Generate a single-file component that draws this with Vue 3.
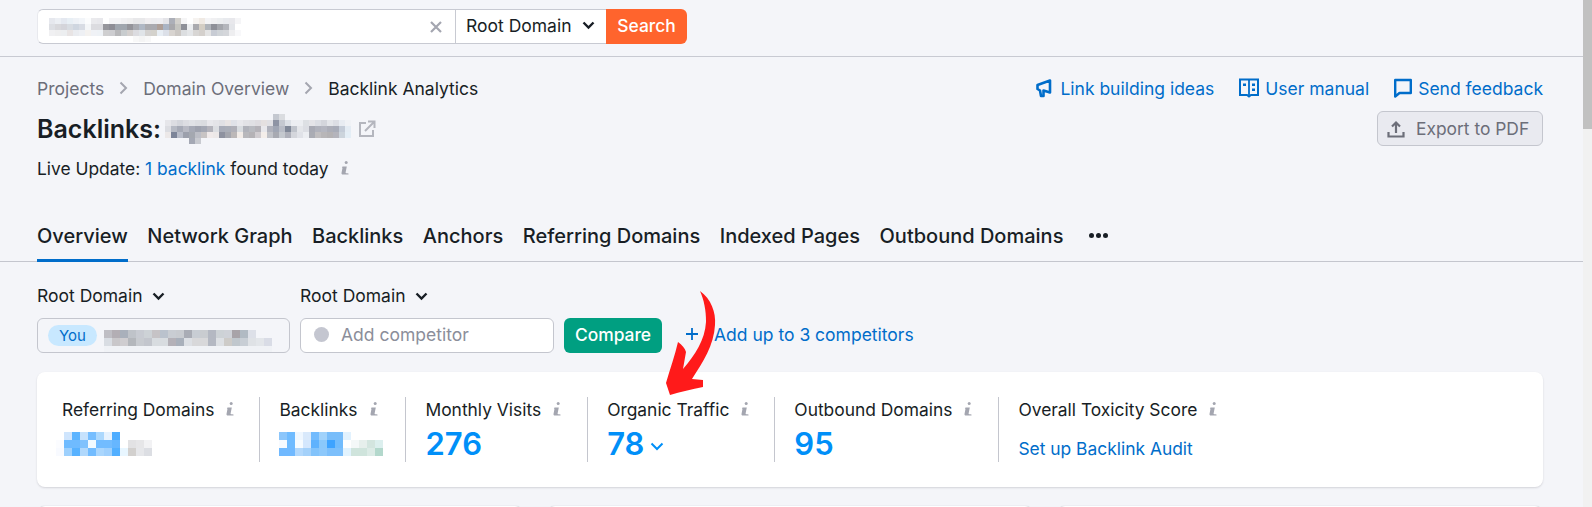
<template>
  <div class="page">
    <div class="topbar">
      <div class="search">
        <div class="search_input">
          <div class="pix url_pix">
            <div v-for="(row, r) in blurs.url" :key="r" class="pix_row">
              <i v-for="(c, k) in row" :key="k" class="cell6" :style="{ background: c }"></i>
            </div>
          </div>
          <svg class="clear" width="14" height="14" viewBox="0 0 14 14"><path d="M2 2l10 10M12 2L2 12" stroke="#a4a6b0" stroke-width="2.2" fill="none" /></svg>
        </div>
        <div class="search_select">
          Root Domain
          <svg class="chev" width="13" height="9" viewBox="0 0 13 9"><path d="M1.500 1.500L6.500 6.500l5-5" stroke="#181e25" stroke-width="2.400" fill="none" /></svg>
        </div>
        <button class="search_btn">Search</button>
      </div>
    </div>

    <div class="head">
      <div class="head_top">
        <div class="crumbs">
          <span>Projects</span>
          <svg width="9" height="14" viewBox="0 0 9 14"><path d="M1.500 1.500L7 7l-5.500 5.500" stroke="#a4a6b0" stroke-width="2" fill="none" /></svg>
          <span>Domain Overview</span>
          <svg width="9" height="14" viewBox="0 0 9 14"><path d="M1.500 1.500L7 7l-5.500 5.500" stroke="#a4a6b0" stroke-width="2" fill="none" /></svg>
          <span class="crumb_last">Backlink Analytics</span>
        </div>
        <div class="head_links">
          <a class="link_idea">
            <svg width="16" height="20" viewBox="0 0 16 20"><path d="M14 2.500v12L7.500 12.500V18H5l-1-5.500L1.500 11V7z" fill="none" stroke="#006dca" stroke-width="2.600" stroke-linejoin="round" /></svg>
            Link building ideas
          </a>
          <a>
            <svg width="20" height="20" viewBox="0 0 20 20"><path d="M1 1.500h18v15.500h-7l-2 1.500-2-1.500H1z" fill="none" stroke="#006dca" stroke-width="2" /><path d="M10 2v15" stroke="#006dca" stroke-width="1.800" /><path d="M4 5.500h3V8H4zM13 5.500h3V8h-3zM13 10.500h3V13h-3z" fill="#006dca" /></svg>
            User manual
          </a>
          <a>
            <svg width="18" height="20" viewBox="0 0 18 20"><path d="M1.200 2h15.600v13H5.500l-4.300 3.500z" fill="none" stroke="#006dca" stroke-width="2.400" stroke-linejoin="round" /></svg>
            Send feedback
          </a>
        </div>
      </div>

      <div class="head_mid">
        <div class="title_row">
          <h1>Backlinks:</h1>
          <div class="pix title_pix">
            <div v-for="(row, r) in blurs.title" :key="r" class="pix_row">
              <i v-for="(c, k) in row" :key="k" class="cell6" :style="{ background: c }"></i>
            </div>
          </div>
          <svg width="18" height="18" viewBox="0 0 18 18"><path d="M8 3H2v13h13v-6" fill="none" stroke="#b4b6be" stroke-width="2" /><path d="M7 11l9-9M10 1.500h6.500V8" fill="none" stroke="#b4b6be" stroke-width="2" /></svg>
        </div>
        <button class="export">
          <svg width="18" height="18" viewBox="0 0 18 18"><path d="M9 13V3M5 6.500L9 2.500l4 4" fill="none" stroke="#6c6e79" stroke-width="2.200" /><path d="M1.500 12v4.500h15V12" fill="none" stroke="#6c6e79" stroke-width="2.200" /></svg>
          Export to PDF
        </button>
      </div>

      <div class="live">
        Live Update:&nbsp;<a>1 backlink</a>&nbsp;found today
        <svg class="info live_info" width="9" height="16" viewBox="0 0 9 16"><circle cx="5.200" cy="2.500" r="1.500" /><path d="M1.500 6.500h4.300L4.600 12.500c-.1.700.7.900 2.900.9v1.100H1.800c-.9 0-1.500-.6-1.300-1.500l1-5.300H.9z" /></svg>
      </div>
    </div>

    <div class="tabs">
      <div v-for="t in tabs" :key="t" class="tab" :class="{ tab_active: t === 'Overview' }">{{ t }}</div>
      <div class="tab_more"><i></i><i></i><i></i></div>
    </div>

    <div class="compare">
      <div class="field">
        <div class="field_label">
          Root Domain
          <svg width="13" height="9" viewBox="0 0 13 9"><path d="M1.500 1.500L6.500 6.500l5-5" stroke="#181e25" stroke-width="2.400" fill="none" /></svg>
        </div>
        <div class="box box_you">
          <span class="you">You</span>
          <div class="pix you_pix">
            <div v-for="(row, r) in blurs.you" :key="r" class="pix_row">
              <i v-for="(c, k) in row" :key="k" class="cell8" :style="{ background: c }"></i>
            </div>
          </div>
        </div>
      </div>
      <div class="field">
        <div class="field_label">
          Root Domain
          <svg width="13" height="9" viewBox="0 0 13 9"><path d="M1.500 1.500L6.500 6.500l5-5" stroke="#181e25" stroke-width="2.400" fill="none" /></svg>
        </div>
        <div class="box">
          <span class="dot"></span>
          <span class="placeholder">Add competitor</span>
        </div>
      </div>
      <button class="compare_btn">Compare</button>
      <a class="add">
        <svg width="14" height="14" viewBox="0 0 14 14"><path d="M7 1v12M1 7h12" stroke="#006dca" stroke-width="1.800" fill="none" /></svg>
        Add up to 3 competitors
      </a>
    </div>

    <div class="stats">
      <div v-for="s in stats" :key="s.label" class="stat">
        <div class="stat_label">
          {{ s.label }}
          <svg class="info" width="9" height="16" viewBox="0 0 9 16"><circle cx="5.200" cy="2.500" r="1.500" /><path d="M1.500 6.500h4.300L4.600 12.500c-.1.700.7.900 2.900.9v1.100H1.800c-.9 0-1.500-.6-1.300-1.500l1-5.300H.9z" /></svg>
        </div>
        <div v-if="s.blur" class="pix stat_pix">
          <div v-for="(row, r) in blurs[s.blur]" :key="r" class="pix_row">
            <i v-for="(c, k) in row" :key="k" class="cell8" :style="{ background: c }"></i>
          </div>
        </div>
        <div v-else-if="s.value" class="stat_value">
          {{ s.value }}
          <svg v-if="s.open" width="14" height="9" viewBox="0 0 14 9"><path d="M1.500 1.500L7 7l5.500-5.500" stroke="#008ff8" stroke-width="2" fill="none" /></svg>
        </div>
        <a v-else class="stat_link">{{ s.link }}</a>
      </div>
    </div>

    <div class="lower">
      <div></div>
      <div></div>
      <div></div>
    </div>

    <svg class="arrow" width="60" height="114" viewBox="660 287 60 114">
      <path d="M700 291C711 299 716 312 715 325C714 345 703 362 692 379L703 380L703 387C692 389 680 392 670 395L666 383C670 369 675 355 678 342C682 345 685 348 686 352L683 369C695 355 705 340 706 322C706 310 704 300 700 291Z" fill="#ff1a1a" />
    </svg>

    <div class="scrollbar"><div class="thumb"></div></div>
  </div>
</template>

<script setup>
const tabs = ['Overview', 'Network Graph', 'Backlinks', 'Anchors', 'Referring Domains', 'Indexed Pages', 'Outbound Domains']

const stats = [
  { label: 'Referring Domains', blur: 'refs' },
  { label: 'Backlinks', blur: 'links' },
  { label: 'Monthly Visits', value: '276' },
  { label: 'Organic Traffic', value: '78', open: true },
  { label: 'Outbound Domains', value: '95' },
  { label: 'Overall Toxicity Score', link: 'Set up Backlink Audit' },
]

// Размытые куски скриншота, цвет на каждую клетку
const t = 'transparent'
const blurs = {
  url: [
    ['#e6e8ee', '#eceff4', '#e4e8f0', '#e8eff5', '#eef1f6', '#f2f5f9', '#fbfcfd', '#eaeaed', '#e8e8ec', '#fff', '#f4f4f6', '#f4f4f6', '#f0f0f2', '#eeeeef', '#e8e8ea', '#e8e8ea', '#f0eef0', '#ededf0', '#eeeef2', '#e4e4e8', '#acafb8', '#d2d0cc', '#f5f5f6', '#fff', '#f6f3f0', '#f0eae4', '#f4f4f6', '#f0f0f2', '#eceef0', '#e8eaee', '#e8e8ec', '#f5f5f7'],
    ['#dddfe4', '#d8d8dc', '#d4d4da', '#d8dce2', '#cfd6e0', '#d8dce4', '#f4f6f8', '#dcdce0', '#dcdce0', '#96969c', '#8e8e96', '#a0a6ae', '#a0a6ae', '#94949a', '#a8aab0', '#b0b8c4', '#aaaaae', '#aaaab0', '#ae9f98', '#aab4c4', '#a8a8ac', '#c4c4c0', '#8e9098', '#eceef0', '#aaaaae', '#d4cec4', '#b0b4ba', '#8e9098', '#a4a6ac', '#b4b6bc', '#e4e6ea', '#fff'],
    ['#f0f0f2', '#eeeeef', '#eceef0', '#e8e4e4', '#eaecf0', '#eef0f4', '#f4f2f0', '#f0f2f6', '#eef2f6', '#cfcfd0', '#cdcdd0', '#b8b8ba', '#c8ccce', '#d4d0ce', '#dcdce0', '#e0e4e8', '#d4d2d0', '#d4d2cc', '#e8eef4', '#dce0e8', '#d8d4d0', '#ccc8c4', '#dcdee0', '#e4e6e8', '#d8d6d4', '#d4d0cc', '#e4e4e4', '#c8ccd4', '#d0d4d8', '#d4d6da', '#eeeef0', '#f8f8fa'],
    [t, t, t, t, t, t, t, t, t, t, t, t, t, t, '#f8f8f8', '#f4f4f4', '#f8f8f8', t, t, t, t, t, t, t, t, t, t, t, t, t, t, t],
  ],
  title: [
    [t, t, t, t, t, t, t, t, t, t, t, t, t, t, t, t, t, t, '#c4c8d0', '#dadce0', t, t, t, t, t, t, t, t, t, t, t],
    ['#e6e6ea', '#dcdde2', '#d4d6dc', '#dcdde2', '#e0e2e6', '#dcdee2', '#dadce0', '#e8e8ec', '#e4e4e8', '#e0e0e4', '#e8e4e4', '#e0e2e8', '#e8e8ec', '#e2e2e6', '#e0e0e4', '#dedce0', '#e4e0e0', '#e0e0e4', '#8e94a4', '#c4c8d0', '#dce0e6', '#eceef2', '#eceef2', '#dde0e4', '#e4e4e8', '#dcdee4', '#d4d6dc', '#e4e6ea', '#dcdee4', '#e8ecf2', '#f0f2f6'],
    ['#dcdde2', '#b6bac4', '#a6aab6', '#b8bac4', '#a6aab6', '#9ea2ae', '#a4a8b4', '#b4b4bc', '#dcdee2', '#a8acb8', '#aaaeb8', '#b0b0b8', '#d8dce0', '#b0b2ba', '#b8bac0', '#b4b2b8', '#e8e8ec', '#b0b2bc', '#a0a6b4', '#b8bcc6', '#808898', '#c0c4cc', '#e4e6ea', '#dcdee4', '#a8aab4', '#b0b2bc', '#b4b6c0', '#acaeb8', '#a8acb8', '#c4ccd8', '#e4ecf4'],
    ['#ece8e8', '#7c8498', '#b8bcc8', '#9ca0ac', '#a4a8b0', '#bcbec6', '#c8c4c4', '#f0eaea', '#ece8e8', '#8e92a0', '#a4a6ae', '#bcb8b8', '#f2ece8', '#b8b8bc', '#b4b2b6', '#d0ccd0', '#f4eeea', '#c0c2c8', '#a8aab2', '#c4c8ce', '#aeb0ba', '#d4d6dc', '#e0e2e8', '#eceef2', '#aaacb4', '#c0bec0', '#b8b6b8', '#b4b2b4', '#b4b4bc', '#ccd4dc', '#e4eef6'],
    [t, t, t, t, '#a4a8b4', '#c8cad0', t, t, t, t, t, t, t, t, t, t, t, t, t, t, t, t, t, t, t, t, t, t, t, t, t],
  ],
  you: [
    ['#bfbec4', '#b3aeb4', '#a9b0bb', '#bfc3c9', '#c8cbd2', '#cdd2d6', '#c6c3c6', '#bac2cd', '#c9cdd3', '#c8cbd0', '#a9acb5', '#c8cdd4', '#c9ccd0', '#b4b8c2', '#cdd2d6', '#cfd2d8', '#a8a3a8', '#b1bac3', '#dde0e8', t, t],
    ['#d9dde3', '#c9c7ca', '#cfcdd0', '#b4b7bc', '#c8cbd0', '#c3c6cd', '#d8dce0', '#d8dce0', '#b4b1b8', '#a9b0bb', '#dde0e5', '#d8d8da', '#d8d8da', '#b4b8c2', '#dde0e4', '#cdcbc8', '#c0c7cd', '#c8ced5', '#dfe2e6', '#e3e6ea', '#d9dce6'],
    ['#f0f2f6', '#f0f2f6', '#f0f2f6', '#f0f2f6', '#f0f2f6', '#f0f2f6', '#f0f2f6', '#f0f2f6', '#f0f2f6', '#f0f2f6', '#f0f2f6', '#f0f2f6', '#f0f2f6', '#f0f2f6', '#f0f2f6', '#f0f2f6', '#f0f2f6', '#f0f2f6', '#f0f2f6', '#f0f2f6', '#f0f2f6'],
  ],
  refs: [
    [t, '#cfe5fd', '#5cb4ff', '#c6e2fd', '#76beff', '#acd8fd', '#e6f2fe', '#4eadff', t, t, t, t],
    ['#fbfcff', '#6fbbff', '#6fbbff', '#80c2fd', '#f2faff', '#72bcff', '#72bcff', '#66b6ff', t, '#e2e2e4', '#e6e6e8', '#f2f2f4'],
    ['#f8faff', '#9dd0fd', '#58b2ff', '#b0d8fc', '#72bcff', '#aad6fd', '#9fd0fd', '#52afff', '#e8f6ff', '#d2d0ce', '#e6e7ea', '#dcdee3'],
  ],
  links: [
    ['#8cc6fb', '#6fbbff', '#eff7ff', '#d9e9fb', '#72bbfd', '#a0d2fb', '#78bdfa', '#78bdfa', '#e2f2fe', t, t, t, t],
    ['#f6faff', '#6fbbff', '#f6fbff', '#d4e7fd', '#5fb2fd', '#8ac8fb', '#3ea3ff', '#72bcfd', t, '#f4f8f8', '#e6efec', '#d3e5df', '#dcefee'],
    ['#70b9ff', '#70b9ff', '#b2d8fc', '#a4d1fa', '#82c3fb', '#8cc8fb', '#7cbffb', '#7cbffb', '#e2f3fe', '#cfe4dc', '#cfe4dc', '#dcebe6', '#b3d8cc'],
  ],
}
</script>

<style>
html,
body {
  overflow: hidden;
}
</style>

<style scoped>
.page {
  position: relative;
  width: 1592px;
  height: 507px;
  overflow: hidden;
  background: #f4f5f9;
  color: #181e25;
  font-family: Inter, "Liberation Sans", sans-serif;
  font-size: 17.5px;
}
a {
  color: #006dca;
}
svg {
  flex-shrink: 0;
}

.pix_row {
  display: flex;
}
.cell6 {
  display: block;
  width: 6px;
  height: 6px;
}
.cell8 {
  display: block;
  width: 8px;
  height: 8px;
}

.topbar {
  padding: 9px 0 0 37px;
  box-sizing: border-box;
  border-bottom: 1px solid #c8cad2;
  height: 57px;
}
.search {
  display: flex;
  width: 650px;
  height: 35px;
  line-height: 31px;
}
.search_input {
  display: flex;
  align-items: center;
  justify-content: space-between;
  width: 419px;
  box-sizing: border-box;
  padding: 0 12px 0 11px;
  background: #fff;
  border: 1px solid #c8cad2;
  border-radius: 6px 0 0 6px;
  border-left-color: #e8e9ee;
}
.url_pix {
  margin-top: 7px;
}
.search_select {
  display: flex;
  align-items: center;
  gap: 10px;
  width: 150px;
  box-sizing: border-box;
  padding: 0 0 2px 10px;
  background: #fff;
  border-top: 1px solid #c8cad2;
  border-bottom: 1px solid #c8cad2;
}
.search_btn {
  width: 81px;
  border: 0;
  padding: 0 0 3px;
  border-radius: 0 6px 6px 0;
  background: #ff642d;
  color: #fff;
  font: 500 17.4px Inter, sans-serif;
}

.head {
  padding: 19px 49px 0 37px;
}
.head_top {
  display: flex;
  justify-content: space-between;
  height: 24px;
}
.crumbs {
  display: flex;
  align-items: center;
  gap: 15px;
  color: #6c6e79;
}
.crumb_last {
  color: #181e25;
}
.head_links {
  display: flex;
  gap: 25px;
}
.head_links a {
  display: flex;
  align-items: center;
  gap: 6px;
}
.head_links .link_idea {
  gap: 8px;
}
.head_mid {
  display: flex;
  justify-content: space-between;
  margin-top: 11px;
  height: 35px;
}
.title_row {
  display: flex;
  align-items: center;
  height: 32px;
  margin-top: 2px;
}
h1 {
  margin: 0;
  font-size: 25px;
  font-weight: 600;
  line-height: 32px;
}
.title_pix {
  margin: 0 7px 0 4px;
}
.export {
  display: flex;
  align-items: center;
  gap: 11px;
  width: 166px;
  height: 35px;
  padding: 0 0 0 9px;
  box-sizing: border-box;
  border: 1px solid #c4c6ce;
  border-radius: 6px;
  background: #e9eaf0;
  color: #6c6e79;
  font: 17.4px Inter, sans-serif;
}
.live {
  display: flex;
  align-items: center;
  margin-top: 10px;
  height: 24px;
  font-size: 17.4px;
}
.info {
  fill: #a4a6b0;
}
.live_info {
  margin-left: 12px;
}

.tabs {
  display: flex;
  align-items: flex-start;
  gap: 19.5px;
  height: 46px;
  margin-top: 35px;
  padding-left: 37px;
  border-bottom: 1.5px solid #c4c6ce;
  font-size: 20px;
  font-weight: 500;
  line-height: 24px;
}
.tab {
  height: 46px;
  padding-top: 9px;
  box-sizing: border-box;
}
.tab_active {
  box-shadow: inset 0 -3px 0 #006dca;
  height: 47px;
}
.tab_more {
  display: flex;
  align-items: center;
  gap: 2px;
  height: 24px;
  margin: 8px 0 0 6px;
}
.tab_more i {
  width: 5px;
  height: 5px;
  border-radius: 50%;
  background: #181e25;
}

.compare {
  display: flex;
  align-items: flex-end;
  gap: 10px;
  margin-top: 22px;
  padding-left: 37px;
}
.field {
  display: flex;
  flex-direction: column;
  gap: 10px;
}
.field_label {
  display: flex;
  align-items: center;
  gap: 9px;
  height: 24px;
  line-height: 24px;
}
.box {
  display: flex;
  align-items: center;
  width: 254px;
  height: 35px;
  padding: 0 0 2px 13px;
  box-sizing: border-box;
  background: #fff;
  border: 1px solid #c4c6ce;
  border-radius: 6px;
}
.box_you {
  width: 253px;
  padding: 0 0 0 10px;
  background: #f4f5f9;
  overflow: hidden;
}
.you {
  display: flex;
  align-items: center;
  justify-content: center;
  width: 49px;
  height: 21px;
  border-radius: 11px;
  background: #c8e8ff;
  color: #006dca;
  font-size: 15px;
  margin-right: 7px;
  flex-shrink: 0;
}
.you_pix {
  margin-top: 12px;
}
.dot {
  width: 15px;
  height: 15px;
  border-radius: 50%;
  background: #c4c6d0;
  margin-right: 12px;
}
.placeholder {
  color: #8b8e9a;
}
.compare_btn {
  width: 98px;
  height: 35px;
  padding: 0 0 2px;
  border: 0;
  border-radius: 6px;
  background: #009f81;
  color: #fff;
  font: 500 17.4px Inter, sans-serif;
}
.add {
  display: flex;
  align-items: center;
  gap: 15px;
  height: 35px;
  padding-bottom: 3px;
  box-sizing: border-box;
  margin-left: 13px;
}

.stats {
  display: flex;
  height: 115px;
  margin: 19px 49px 0 37px;
  padding: 25px 0 0 6px;
  box-sizing: border-box;
  background: #fff;
  border-radius: 8px;
  box-shadow: 0 1px 2px rgba(24, 30, 37, 0.15);
  font-size: 17.4px;
}
.stat {
  height: 65px;
  padding: 0 24px 0 19px;
  border-left: 1px solid #c4c6ce;
}
.stat:first-child {
  border-left: 0;
}
.stat:nth-child(2) {
  padding-right: 22px;
}
.stat:nth-child(3),
.stat:nth-child(5) {
  padding-right: 25px;
}
.stat_label {
  display: flex;
  align-items: center;
  gap: 12px;
  height: 24px;
}
.stat_pix {
  margin: 11px 0 0 -6px;
}
.stat:nth-child(2) .stat_pix {
  margin-left: 0;
}
.stat_value {
  display: flex;
  align-items: center;
  gap: 6px;
  margin-top: 3px;
  color: #008ff8;
  font-size: 31px;
  font-weight: 600;
  line-height: 40px;
}
.stat_value svg {
  margin-top: 5px;
}
.stat_link {
  display: block;
  margin-top: 16px;
  line-height: 24px;
}

.lower {
  display: grid;
  grid-template-columns: repeat(3, 1fr);
  gap: 24px;
  margin: 19px 49px 0 37px;
}
.lower div {
  height: 60px;
  border-radius: 8px;
  background: #fff;
  box-shadow: 0 0 1px rgba(24, 30, 37, 0.3);
}

/* стрелка нарисована поверх скриншота */
.arrow {
  position: absolute;
  left: 660px;
  top: 287px;
}
.scrollbar {
  position: absolute;
  top: 0;
  right: 0;
  width: 9px;
  height: 100%;
  background: #f1f1f1;
}
.thumb {
  height: 129px;
  background: #c1c1c1;
}
</style>
